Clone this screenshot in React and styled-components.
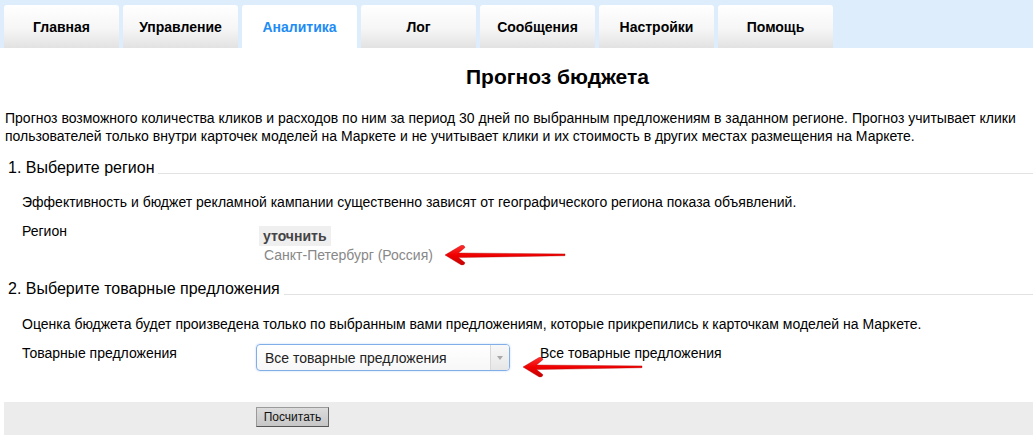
import React from "react";
import styled, { createGlobalStyle } from "styled-components";

const GlobalStyle = createGlobalStyle`
  html, body { margin: 0; padding: 0; background: #fff; }
  body {
    font-family: "Liberation Sans", Arial, Helvetica, sans-serif;
    font-size: 14px;
    color: #000;
  }
`;

const Page = styled.div`
  position: relative;
  width: 1033px;
  height: 435px;
  overflow: hidden;
`;

const TabBar = styled.nav`
  display: flex;
  gap: 4px;
  height: 48px;
  box-sizing: border-box;
  padding: 5px 4px 0;
  background: #deedfc;
`;

const Tab = styled.div`
  width: 115px;
  display: flex;
  align-items: center;
  justify-content: center;
  border-radius: 3px 3px 0 0;
  font-weight: bold;
  font-size: 14px;
  color: ${(p) => (p.$active ? "#1e8cf5" : "#000")};
  background: ${(p) =>
    p.$active ? "#fff" : "linear-gradient(#ffffff 0%, #f6f6f6 55%, #e2e2e2 100%)"};
`;

const Title = styled.h1`
  margin: 17px 0 0;
  padding-left: 82px;
  text-align: center;
  font-size: 21px;
  line-height: 24px;
  font-weight: bold;
`;

const Intro = styled.p`
  margin: 20px 0 0;
  padding: 0 0 0 5px;
  line-height: 18px;
`;

const SectionHead = styled.div`
  display: flex;
  align-items: flex-end;
  margin-top: ${(p) => p.$top}px;
  padding-left: 8px;
  font-size: 16px;
  line-height: 20px;
`;

const HeadLine = styled.div`
  flex: 1;
  margin: 0 0 4px 4px;
  border-bottom: 1px solid #e2e2e2;
`;

const SectionBody = styled.div`
  padding-left: 22px;
`;

const Note = styled.p`
  margin: ${(p) => p.$top}px 0 0;
  line-height: 18px;
`;

const FormRow = styled.div`
  display: grid;
  grid-template-columns: 234px auto 1fr;
  align-items: start;
  margin-top: 11px;
  line-height: 18px;
`;

const RegionValue = styled.div`
  display: flex;
  flex-direction: column;
  align-items: flex-start;
  padding: 4px 0 0 3px;
`;

const RefineLink = styled.span`
  display: inline-block;
  padding: 0 4px;
  height: 20px;
  line-height: 20px;
  background: #efefef;
  font-weight: bold;
  color: #444;
`;

const RegionName = styled.span`
  padding-left: 5px;
  color: #888;
  line-height: 19px;
`;

const Select = styled.div`
  position: relative;
  width: 254px;
  height: 27px;
  box-sizing: border-box;
  display: flex;
  align-items: center;
  padding-left: 8px;
  border: 1px solid #82aee8;
  border-radius: 4px;
  background: linear-gradient(#ffffff, #f7f7f7);
  box-shadow: 0 0 2px rgba(90, 150, 230, 0.45);
  color: #222;
  font-size: 14px;
`;

const SelectArrow = styled.div`
  position: absolute;
  right: 0;
  top: 0;
  bottom: 0;
  width: 18px;
  border-left: 1px solid #d8d8d8;
  border-radius: 0 3px 3px 0;
  background: linear-gradient(#f8f8f8, #e6e6e6);
  display: flex;
  align-items: center;
  justify-content: center;
  &::after {
    content: "";
    border-left: 3px solid transparent;
    border-right: 3px solid transparent;
    border-top: 4px solid #a8a8a8;
  }
`;

const SelectedText = styled.span`
  padding-left: 30px;
`;

const Footer = styled.div`
  margin: 31px 0 0 4px;
  height: 33px;
  box-sizing: border-box;
  padding: 5px 0 0 252px;
  background: #ececec;
`;

const Button = styled.button`
  width: 73px;
  height: 20px;
  padding: 0;
  font-family: "Liberation Sans", Arial, sans-serif;
  font-size: 12px;
  color: #111;
  background: linear-gradient(#dcdcdc, #c6c6c6);
  border: 1px solid #9a9a9a;
  border-bottom-color: #555;
  border-right-color: #666;
  border-radius: 0;
`;

const Pointer = styled.svg`
  position: absolute;
  left: ${(p) => p.$x}px;
  top: ${(p) => p.$y}px;
  overflow: visible;
`;

function RedArrow({ x, y, length }) {
  const L = length;
  return (
    <Pointer $x={x} $y={y} width={L} height={22} viewBox={`0 0 ${L} 22`}>
      <defs>
        <linearGradient id={`ag${x}`} x1="0" y1="0" x2="0" y2="1">
          <stop offset="0" stopColor="#ff3030" />
          <stop offset="0.5" stopColor="#f00000" />
          <stop offset="1" stopColor="#c80000" />
        </linearGradient>
      </defs>
      <path
        d={`M0 11 L16 1.5 Q19.5 0.8 20 3.5 L13.5 9 L${L} 9.9 L${L} 11.7 L13.5 13.6 L20 18.8 Q19.5 21.6 16 20.8 Z`}
        fill={`url(#ag${x})`}
        stroke="#b00000"
        strokeWidth="0.4"
      />
    </Pointer>
  );
}

const tabs = ["Главная", "Управление", "Аналитика", "Лог", "Сообщения", "Настройки", "Помощь"];

export default function App() {
  return (
    <>
      <GlobalStyle />
      <Page>
        <TabBar>
          {tabs.map((t) => (
            <Tab key={t} $active={t === "Аналитика"}>
              {t}
            </Tab>
          ))}
        </TabBar>

        <Title>Прогноз бюджета</Title>

        <Intro>
          Прогноз возможного количества кликов и расходов по ним за период 30 дней по выбранным
          предложениям в заданном регионе. Прогноз учитывает клики пользователей только внутри
          карточек моделей на Маркете и не учитывает клики и их стоимость в других местах
          размещения на Маркете.
        </Intro>

        <SectionHead $top={13}>
          1. Выберите регион
          <HeadLine />
        </SectionHead>
        <SectionBody>
          <Note $top={15}>
            Эффективность и бюджет рекламной кампании существенно зависят от географического
            региона показа объявлений.
          </Note>
          <FormRow>
            <span>Регион</span>
            <RegionValue>
              <RefineLink>уточнить</RefineLink>
              <RegionName>Санкт-Петербург (Россия)</RegionName>
            </RegionValue>
          </FormRow>
        </SectionBody>

        <SectionHead $top={14}>
          2. Выберите товарные предложения
          <HeadLine />
        </SectionHead>
        <SectionBody>
          <Note $top={16}>
            Оценка бюджета будет произведена только по выбранным вами предложениям, которые
            прикрепились к карточкам моделей на Маркете.
          </Note>
          <FormRow>
            <span>Товарные предложения</span>
            <Select>
              Все товарные предложения
              <SelectArrow />
            </Select>
            <SelectedText>Все товарные предложения</SelectedText>
          </FormRow>
        </SectionBody>

        <Footer>
          <Button>Посчитать</Button>
        </Footer>

        <RedArrow x={445} y={244} length={120} />
        <RedArrow x={523} y={356} length={119} />
      </Page>
    </>
  );
}
